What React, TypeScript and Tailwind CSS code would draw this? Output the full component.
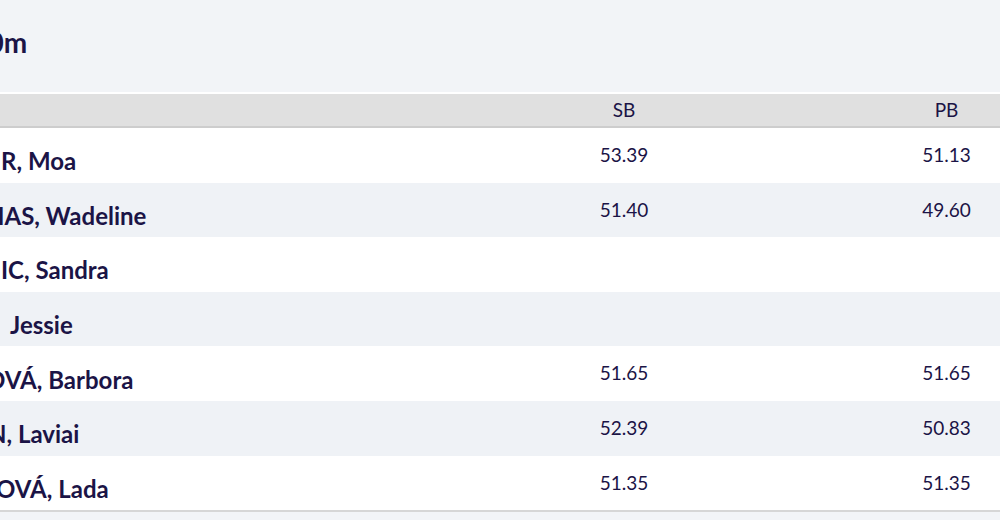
import React from "react";

type Entry = {
  name: string;
  shift: string;
  sb?: string;
  pb?: string;
};

// the page is seen through a crop, so the leading part of each name sits off screen
const entries: Entry[] = [
  { name: "R, Moa", shift: "ml-[1px]", sb: "53.39", pb: "51.13" },
  { name: "HAS, Wadeline", shift: "-ml-[14px]", sb: "51.40", pb: "49.60" },
  { name: "IC, Sandra", shift: "ml-[1px]" },
  { name: "Jessie", shift: "ml-[10px]" },
  { name: "OVÁ, Barbora", shift: "-ml-[14px]", sb: "51.65", pb: "51.65" },
  { name: "N, Laviai", shift: "-ml-[12px]", sb: "52.39", pb: "50.83" },
  { name: "OVÁ, Lada", shift: "-ml-[4px]", sb: "51.35", pb: "51.35" },
];

const App: React.FC = () => {
  return (
    <div
      className="w-[1000px] h-[520px] overflow-hidden bg-[#f2f4f7] text-[#1b1446]"
      style={{ fontFamily: "Lato, 'Noto Sans', sans-serif" }}
    >
      <div className="h-[92px] pt-[25px]">
        <h1 className="-ml-[45px] text-[28px] leading-[34px] font-bold whitespace-nowrap">
          400m
        </h1>
      </div>

      <div className="border-t-2 border-white">
        <div className="flex items-center h-[34px] bg-[#e0e0e0] border-b-2 border-[#cdcdcd] text-[19px]">
          <div className="flex-1" />
          <div className="w-[200px] text-center">SB</div>
          <div className="w-[107px] ml-[169px] text-center">PB</div>
        </div>

        {entries.map((e, i) => (
          <div
            key={i}
            className={`flex items-center h-[54.6px] ${
              i % 2 === 0 ? "bg-white" : "bg-[#eff2f6]"
            }`}
          >
            <div className="flex-1 min-w-0">
              <div
                className={`${e.shift} mt-[12px] text-[24px] leading-[30px] font-bold whitespace-nowrap`}
              >
                {e.name}
              </div>
            </div>
            <div className="w-[200px] text-center text-[19px]">{e.sb}</div>
            <div className="w-[107px] ml-[169px] text-center text-[19px]">
              {e.pb}
            </div>
          </div>
        ))}

        <div className="border-t-2 border-[#d6d6d6]" />
      </div>
    </div>
  );
};

export default App;
